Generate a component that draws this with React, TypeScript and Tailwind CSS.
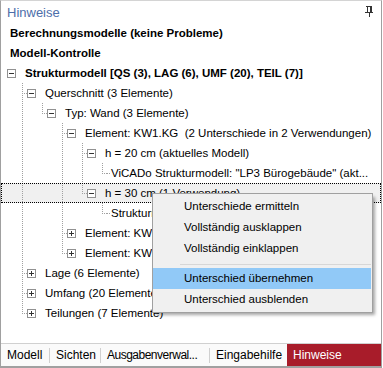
type Guide = "line" | "none" | "tee" | "end";

type Row = {
  level: number;
  text: string;
  bold?: boolean;
  box?: "minus" | "plus";
  guides?: boolean[];
  last?: boolean;
  selected?: boolean;
};

const rows: Row[] = [
  { level: 0, text: "Berechnungsmodelle (keine Probleme)", bold: true },
  { level: 0, text: "Modell-Kontrolle", bold: true },
  { level: 0, box: "minus", bold: true, text: "Strukturmodell [QS (3), LAG (6), UMF (20), TEIL (7)]" },
  { level: 1, box: "minus", guides: [], last: false, text: "Querschnitt (3 Elemente)" },
  { level: 2, box: "minus", guides: [true], last: true, text: "Typ: Wand (3 Elemente)" },
  { level: 3, box: "minus", guides: [true, false], last: false, text: "Element: KW1.KG  (2 Unterschiede in 2 Verwendungen)" },
  { level: 4, box: "minus", guides: [true, false, true], last: false, text: "h = 20 cm (aktuelles Modell)" },
  { level: 5, guides: [true, false, true, true], last: true, text: 'ViCADo Strukturmodell: "LP3 Bürogebäude" (akt...' },
  { level: 4, box: "minus", guides: [true, false, true], last: true, selected: true, text: "h = 30 cm (1 Verwendung)" },
  { level: 5, guides: [true, false, true, false], last: true, text: 'Strukturmodell: "LP3 Bürogebäude"' },
  { level: 3, box: "plus", guides: [true, false], last: false, text: "Element: KW1.EG  (1 Unterschied)" },
  { level: 3, box: "plus", guides: [true, false], last: true, text: "Element: KW2.KG  (1 Unterschied)" },
  { level: 1, box: "plus", guides: [], last: false, text: "Lage (6 Elemente)" },
  { level: 1, box: "plus", guides: [], last: false, text: "Umfang (20 Elemente)" },
  { level: 1, box: "plus", guides: [], last: true, text: "Teilungen (7 Elemente)" },
];

const GuideCell = ({ kind }: { kind: Guide }) => {
  let d = "";
  if (kind === "line") d = "M15.5 0V20";
  if (kind === "tee") d = "M15.5 0V20M15 10.5H20";
  if (kind === "end") d = "M15.5 0V11M15 10.5H20";
  return (
    <svg width="20" height="20" className="shrink-0" shapeRendering="crispEdges">
      {d && <path d={d} stroke="#a0a0a0" strokeWidth="1" strokeDasharray="1 1" fill="none" />}
    </svg>
  );
};

const ExpandBox = ({ kind }: { kind: "minus" | "plus" }) => (
  <svg width="9" height="9" className="shrink-0 mt-[6px]" shapeRendering="crispEdges">
    <rect x="0.5" y="0.5" width="8" height="8" fill="#fff" stroke="#919191" />
    <path d={kind === "plus" ? "M2 4.5H7M4.5 2V7" : "M2 4.5H7"} stroke="#333" />
  </svg>
);

const TreeRow = ({ row }: { row: Row }) => {
  const cells: Guide[] = [];
  if (row.level > 0) {
    (row.guides || []).forEach((g) => cells.push(g ? "line" : "none"));
    cells.push(row.last ? "end" : "tee");
  }
  const leaf = row.level > 0 && !row.box;
  return (
    <div
      className={`flex h-5 items-start whitespace-pre overflow-hidden ${
        row.box || row.level > 0 ? "pl-[6px]" : "pl-[9px]"
      } ${row.selected ? "bg-[#f0f0f0] outline-1 outline-dotted outline-black -outline-offset-1" : ""}`}
    >
      {cells.map((c, i) => (
        <GuideCell key={i} kind={c} />
      ))}
      {row.box && <ExpandBox kind={row.box} />}
      {leaf && (
        <svg width="4" height="20" className="shrink-0" shapeRendering="crispEdges">
          <path d="M0 10.5H4" stroke="#a0a0a0" strokeDasharray="1 1" />
        </svg>
      )}
      <span
        className={`leading-5 text-[11.5px] text-black ${row.bold ? "font-bold" : ""} ${
          row.box ? "ml-[9px]" : ""
        }`}
      >
        {row.text}
      </span>
    </div>
  );
};

const menuItems = [
  "Unterschiede ermitteln",
  "Vollständig ausklappen",
  "Vollständig einklappen",
  "-",
  "Unterschied übernehmen",
  "Unterschied ausblenden",
];

export default function App() {
  return (
    <div className="relative w-[382px] h-[368px] bg-white border border-[#a0a0a0] border-t-[#d4d4d4] border-b-2 flex flex-col font-['Liberation_Sans',Arial,sans-serif]">
      {/* header */}
      <div className="h-[22px] shrink-0 flex items-center justify-between pl-[6px] pr-[8px]">
        <span className="text-[13px] text-[#4d6eaa] leading-none">Hinweise</span>
        <svg width="8" height="11" className="mb-[1px]" shapeRendering="crispEdges">
          <path d="M1 0.5H7M2.5 0.5V6M5.5 0.5V6M6.5 0.5V6M0 6.5H8M4.5 7V11" stroke="#333" fill="none" />
        </svg>
      </div>

      {/* tree */}
      <div className="h-[320px] shrink-0 overflow-hidden">
        {rows.map((r, i) => (
          <TreeRow key={i} row={r} />
        ))}
      </div>

      {/* tabs */}
      <div className="flex-1 flex items-stretch border-t border-[#d0d0d0] bg-[#fafafa] text-[12px] text-black whitespace-nowrap">
        <div className="w-[48px] pl-[6px] flex items-center">Modell</div>
        <div className="w-px h-[15px] self-center bg-[#d0d0d0]" />
        <div className="w-[50px] pl-[6px] flex items-center">Sichten</div>
        <div className="w-px h-[15px] self-center bg-[#d0d0d0]" />
        <div className="w-[108px] pl-[6px] flex items-center tracking-[-0.5px]">Ausgabenverwal...</div>
        <div className="w-px h-[15px] self-center bg-[#d0d0d0]" />
        <div className="w-[77px] pl-[6px] flex items-center">Eingabehilfe</div>
        <div className="flex-1 pl-[6px] flex items-center bg-[#a81c2a] text-white">Hinweise</div>
      </div>

      {/* context menu */}
      <div className="absolute left-[151px] top-[192px] w-[221px] bg-[#f0f0f0] border border-[#a0a0a0] py-[2px] pr-[1px] shadow-[3px_3px_3px_-1px_rgba(0,0,0,0.35)] text-[11.5px] text-black">
        {menuItems.map((m, i) =>
          m === "-" ? (
            <div key={i} className="h-px bg-[#d7d7d7] ml-[27px] mt-[5px] mb-[3px]" />
          ) : (
            <div
              key={i}
              className={`h-[21px] flex items-center pl-[31px] ${i === 4 ? "bg-[#91c9f7]" : ""}`}
            >
              {m}
            </div>
          )
        )}
      </div>
    </div>
  );
}
